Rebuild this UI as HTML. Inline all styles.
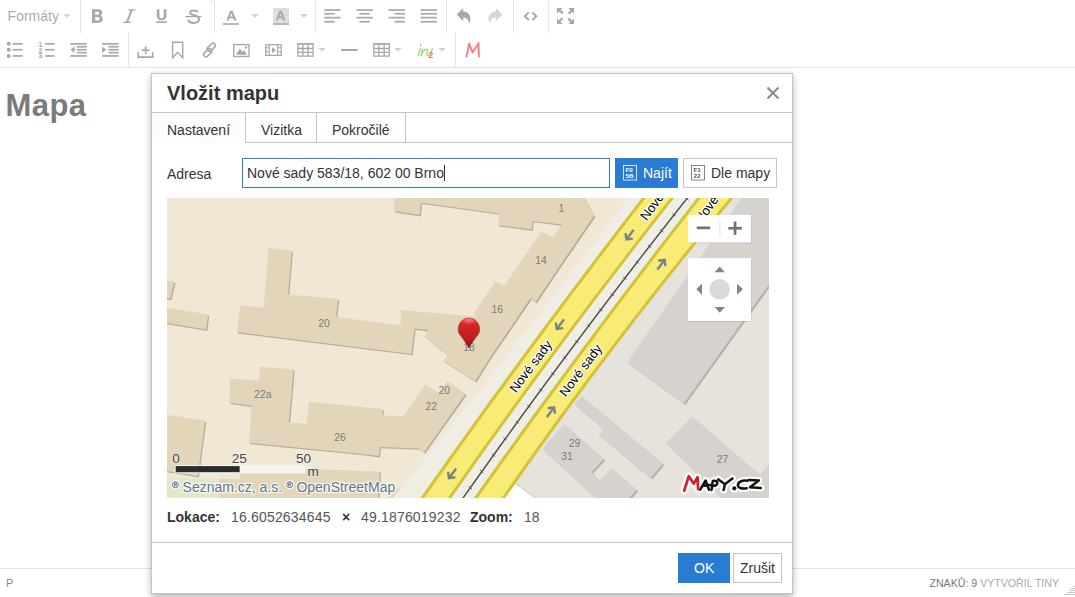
<!DOCTYPE html>
<html><head><meta charset="utf-8">
<style>
*{box-sizing:border-box}
html,body{margin:0;padding:0}
body{width:1075px;height:597px;overflow:hidden;background:#fff;position:relative;font-family:"Liberation Sans",sans-serif}
.a{position:absolute}
svg{display:block}
.ic{position:absolute;fill:#a6a6a6}
.sep{position:absolute;width:1px;background:#e6e6e6}
.t{position:absolute;white-space:nowrap;line-height:1}
</style></head><body>
<!-- toolbar -->
<div class="a" style="left:0;top:67px;width:1075px;height:1px;background:#e0e0e0"></div>
<div class="sep" style="left:80px;top:0;height:33px"></div>
<div class="sep" style="left:214px;top:0;height:33px"></div>
<div class="sep" style="left:211px;top:0;height:3px;background:#e3e3e3"></div>
<div class="sep" style="left:315px;top:0;height:33px"></div>
<div class="sep" style="left:446px;top:0;height:33px"></div>
<div class="sep" style="left:513px;top:0;height:33px"></div>
<div class="sep" style="left:548px;top:0;height:33px"></div>
<div class="sep" style="left:128px;top:33px;height:34px"></div>
<div class="sep" style="left:455px;top:33px;height:34px"></div>
<div id="toolbar"><svg class="a" style="left:0;top:0" width="600" height="67" viewBox="0 0 600 67">
<text x="7.6" y="21" font-family="Liberation Sans" font-size="14" fill="#acacac">Formáty</text>
<path d="M63.5 14.2H70.5L67 18Z" fill="#cfd3d6"/>
<g fill="#a8a8a8">
<path fill-rule="evenodd" d="M92 9.2H98C101 9.2 102.2 11 102.2 12.7C102.2 14.2 101.3 15.3 100.3 15.7C101.8 16.1 102.8 17.4 102.8 19.1C102.8 21.6 100.9 22.9 98 22.9H92ZM95.2 11.7V14.8H97.6C98.7 14.8 99.2 14.2 99.2 13.25C99.2 12.3 98.7 11.7 97.6 11.7ZM95.2 17.1V20.4H97.8C99 20.4 99.6 19.8 99.6 18.75C99.6 17.7 99 17.1 97.8 17.1Z"/>
<path d="M128.6 9.2H135.6L135.3 10.6H132.6L128.3 21.5H130.7L130.4 22.9H123.4L123.7 21.5H126.2L130.5 10.6H128.3Z"/>
<path d="M156.8 9.2H159.4V15.8C159.4 17.6 160.3 18.4 161.6 18.4C162.9 18.4 163.8 17.6 163.8 15.8V9.2H166.4V15.8C166.4 18.9 164.5 20.3 161.6 20.3C158.7 20.3 156.8 18.9 156.8 15.8Z"/>
<rect x="156.2" y="21.2" width="10.8" height="1.7"/>
<path d="M197.6 12.3C197.2 11 196 10.6 193.5 10.6C191 10.6 190.2 11.6 190.2 12.7C190.2 14.3 192.3 14.8 194.2 15.3C196.9 16 199 16.9 199 19.3C199 21.6 197.2 22.9 193.6 22.9C190.5 22.9 188.7 21.8 188.3 19.7" fill="none" stroke="#a8a8a8" stroke-width="2"/>
<rect x="185.2" y="15.9" width="16.4" height="1.3"/>
<path d="M230.2 10.8H232.6L236.4 20.6H234.1L233.2 18.2H229.5L228.6 20.6H226.4ZM230.1 16.4H232.6L231.4 12.9Z"/>
<rect x="222.9" y="23.2" width="16.1" height="1.6"/>
<path d="M251.1 13.9H258.9L255 18Z" fill="#cfd3d6"/>
<rect x="273.1" y="8" width="15.9" height="15.4" fill="#dedede"/>
<path d="M279.4 10.8H281.8L285.4 20.6H283.2L282.3 18.2H278.8L277.9 20.6H275.8ZM279.3 16.4H281.8L280.6 12.9Z"/>
<rect x="273.1" y="23.2" width="15.9" height="1.6"/>
<path d="M300 13.9H307.8L303.9 18Z" fill="#cfd3d6"/>
<rect x="324.2" y="9.2" width="16.4" height="1.7"/><rect x="324.2" y="12.9" width="10.4" height="1.7"/><rect x="324.2" y="16.8" width="16.4" height="1.7"/><rect x="324.2" y="20.9" width="10.4" height="1.7"/>
<rect x="356.4" y="9.2" width="16.4" height="1.7"/><rect x="359.4" y="12.9" width="10.4" height="1.7"/><rect x="356.4" y="16.8" width="16.4" height="1.7"/><rect x="359.4" y="20.9" width="10.4" height="1.7"/>
<rect x="388.6" y="9.2" width="16.4" height="1.7"/><rect x="394.6" y="12.9" width="10.4" height="1.7"/><rect x="388.6" y="16.8" width="16.4" height="1.7"/><rect x="394.6" y="20.9" width="10.4" height="1.7"/>
<rect x="420.6" y="9.2" width="16.4" height="1.7"/><rect x="420.6" y="12.9" width="16.4" height="1.7"/><rect x="420.6" y="16.8" width="16.4" height="1.7"/><rect x="420.6" y="20.9" width="16.4" height="1.7"/>
<path d="M456.7 14.6L463.2 8V11.6C467.6 11.8 470.4 14.5 470.4 18.6C470.4 20.5 469.8 22.2 468.8 23.8C469.1 20.6 467.2 17.7 463.2 17.6V21.2Z"/>
<path d="M502.3 14.6L495.8 8V11.6C491.4 11.8 488.6 14.5 488.6 18.6C488.6 20.5 489.2 22.2 490.2 23.8C489.9 20.6 491.8 17.7 495.8 17.6V21.2Z" fill="#d6d6d6"/>
<path d="M528.8 12.4L524.8 16.2L528.8 20M532.4 12.4L536.4 16.2L532.4 20" fill="none" stroke="#a8a8a8" stroke-width="1.9"/>
<path d="M557 8H562.6L560.8 9.8L563.6 12.6L562 14.2L559.2 11.4L557 13.6ZM574 8V13.6L572.2 11.8L569.4 14.6L567.8 13L570.6 10.2L568.4 8ZM557 24V18.4L558.8 20.2L561.6 17.4L563.2 19L560.4 21.8L562.6 24ZM574 24H568.4L570.2 22.2L567.4 19.4L569 17.8L571.8 20.6L574 18.4Z"/>
<circle cx="8.7" cy="43.8" r="2"/><circle cx="8.7" cy="49.7" r="2"/><circle cx="8.7" cy="55.9" r="2"/>
<rect x="12.6" y="43" width="10" height="1.7"/><rect x="12.6" y="48.9" width="10" height="1.7"/><rect x="12.6" y="55.1" width="10" height="1.7"/>
<text x="38.4" y="46.9" font-family="Liberation Sans" font-size="7" font-weight="bold" fill="#a8a8a8">1</text><text x="38.4" y="52.5" font-family="Liberation Sans" font-size="7" font-weight="bold" fill="#a8a8a8">2</text><text x="38.4" y="58.1" font-family="Liberation Sans" font-size="7" font-weight="bold" fill="#a8a8a8">3</text>
<rect x="45" y="43" width="9.5" height="1.7"/><rect x="45" y="48.9" width="9.5" height="1.7"/><rect x="45" y="55.1" width="9.5" height="1.7"/>
<rect x="70.3" y="43" width="16.5" height="1.7"/><rect x="76.8" y="45.9" width="10" height="1.7"/><rect x="76.8" y="48.9" width="10" height="1.7"/><rect x="76.8" y="51.8" width="10" height="1.7"/><rect x="70.3" y="55.1" width="16.5" height="1.7"/>
<path d="M70.4 49.7L74.6 46.6V52.8Z"/>
<rect x="102.1" y="43" width="16.5" height="1.7"/><rect x="108.6" y="45.9" width="10" height="1.7"/><rect x="108.6" y="48.9" width="10" height="1.7"/><rect x="108.6" y="51.8" width="10" height="1.7"/><rect x="102.1" y="55.1" width="16.5" height="1.7"/>
<path d="M106.3 49.7L102.1 46.6V52.8Z"/>
<rect x="144.8" y="46.3" width="1.7" height="7.8"/><rect x="141.7" y="49.3" width="7.8" height="1.7"/>
<path d="M137.3 52.3H139V56.3H151.9V52.3H153.6V58H137.3Z"/>
<path d="M172.6 42.3H182.7V57.8L177.65 52.2L172.6 57.8Z" fill="none" stroke="#a8a8a8" stroke-width="1.4"/>
<g fill="none" stroke="#a8a8a8" stroke-width="1.6"><rect x="203" y="50.5" width="9.5" height="4.6" rx="2.3" transform="rotate(-45 207.75 52.8)"/><rect x="206.5" y="45" width="9.5" height="4.6" rx="2.3" transform="rotate(-45 211.25 47.3)"/></g>
<rect x="233.7" y="44.6" width="15.3" height="11.9" fill="none" stroke="#a8a8a8" stroke-width="1.4"/>
<path d="M236 54.8L239.8 48.5L242.5 52L244.2 50.3L247 54.8Z"/><circle cx="246" cy="47.5" r="1.2"/>
<rect x="265.7" y="44.8" width="15.5" height="10.6" fill="none" stroke="#a8a8a8" stroke-width="1.3"/>
<path d="M269.2 44.2V56M277.6 44.2V56M265 47.8H269.2M265 51.8H269.2M277.6 47.8H282M277.6 51.8H282" stroke="#a8a8a8" stroke-width="1.1"/>
<path d="M272 47.2L276 50.1L272 53Z"/>
<rect x="297.2" y="43" width="16.6" height="1.8"/>
<path d="M297.9 44.5V56.1H313.1V44.5M297.9 48.5H313.1M297.9 52.3H313.1M302.9 44.5V56.1M308.1 44.5V56.1" fill="none" stroke="#a8a8a8" stroke-width="1.3"/>
<path d="M318 48.1H325.9L322 51.8Z" fill="#cfd3d6"/>
<rect x="341" y="49" width="16.7" height="2"/>
<rect x="373.1" y="43" width="16.9" height="1.8"/>
<path d="M373.8 44.5V56.1H389.3V44.5M373.8 48.5H389.3M373.8 52.3H389.3M378.9 44.5V56.1M384.2 44.5V56.1" fill="none" stroke="#a8a8a8" stroke-width="1.3"/>
<path d="M394.2 47.9H401.9L398 51.8Z" fill="#cfd3d6"/>
<path d="M438.2 47.9H445.8L442 51.8Z" fill="#cfd3d6"/>
</g>
<path d="M420.6 44.5L420.8 45.8M420 48.5C419.5 51 418.8 53.5 418.2 55.8M422.5 49C422 51.5 421.4 53.8 421 56C422.5 52 424.5 49.5 426.5 49.3C428 49.2 427.6 51.5 427 53.5C426.6 55 426.8 56 428 55.8C430 55.4 431.5 52 432.2 48.8" fill="none" stroke="#a8d48a" stroke-width="1.4" stroke-linecap="round"/>
<text x="428.6" y="57.8" font-family="Liberation Sans" font-size="8.5" font-weight="bold" fill="#e07b7b">2</text>
<path d="M466.5 56.5C467.5 52 468.5 47.5 469.2 43.6C470.5 47 471.5 50 472.5 52.5C474.5 49.5 476.5 46.5 478.5 43.2C478.6 47.5 478.6 52 478.9 56.5" fill="none" stroke="#f08585" stroke-width="2" stroke-linecap="round" stroke-linejoin="round"/>
</svg></div>

<!-- content -->
<div class="t" style="left:5.6px;top:90.2px;font-size:31px;font-weight:bold;color:#7b7b7b;letter-spacing:0.4px">Mapa</div>

<!-- status -->
<div class="a" style="left:0;top:568px;width:1075px;height:1px;background:#e0e0e0"></div>
<div class="t" style="left:6px;top:578px;font-size:11px;color:#888">P</div>
<div class="t" style="left:929.5px;top:578px;font-size:10.6px;color:#777">ZNAKŮ: 9 <span style="color:#aaa">VYTVOŘIL TINY</span></div>

<svg class="a" style="left:1060px;top:584px" width="15" height="13" viewBox="1060 584 15 13"><g fill="#c4c4c4"><rect x="1073" y="585.8" width="2" height="1"/><rect x="1071" y="587.9" width="4" height="1"/><rect x="1069" y="589.9" width="6" height="1"/><rect x="1067" y="591.9" width="8" height="1"/><rect x="1065" y="594" width="10" height="1"/></g></svg>
<!-- modal -->
<div class="a" style="left:151px;top:73px;width:642px;height:521px;background:#fff;border:1px solid #c5c5c5;box-shadow:0 3px 7px rgba(0,0,0,.3)">
</div>
<div id="modal">
<div class="t" style="left:167px;top:83px;font-size:20px;font-weight:bold;color:#333">Vložit mapu</div>
<svg class="a" style="left:766px;top:86px" width="14" height="14" viewBox="0 0 14 14"><path d="M1.5 1.5L12.5 12.5M12.5 1.5L1.5 12.5" stroke="#8a8a8a" stroke-width="2"/></svg>
<div class="a" style="left:152px;top:113px;width:93px;height:29px;background:#fcfcfc"></div>
<div class="a" style="left:152px;top:112px;width:640px;height:1px;background:#c5c5c5"></div>
<div class="a" style="left:245px;top:142px;width:547px;height:1px;background:#c5c5c5"></div>
<div class="a" style="left:245px;top:113px;width:1px;height:30px;background:#c5c5c5"></div>
<div class="a" style="left:316px;top:113px;width:1px;height:30px;background:#c5c5c5"></div>
<div class="a" style="left:405px;top:113px;width:1px;height:30px;background:#c5c5c5"></div>
<div class="t" style="left:167px;top:123px;font-size:14px;color:#333">Nastavení</div>
<div class="t" style="left:261px;top:123px;font-size:14px;color:#333">Vizitka</div>
<div class="t" style="left:332px;top:123px;font-size:14px;color:#333">Pokročilé</div>
<div class="t" style="left:167px;top:167px;font-size:14px;color:#333">Adresa</div>
<div class="a" style="left:242px;top:158px;width:368px;height:30px;border:1px solid #2f7bd0"></div>
<div class="t" style="left:247px;top:165.3px;font-size:14px;color:#333">Nové sady 583/18, 602 00 Brno<span style="display:inline-block;width:1px;height:16px;background:#333;vertical-align:-3px"></span></div>
<div class="a" style="left:615px;top:158px;width:63px;height:30px;background:#2a7bd3"></div>
<svg class="a" style="left:622px;top:164px" width="16" height="17" viewBox="0 0 16 17"><rect x="1.5" y="1.5" width="13" height="14.5" fill="none" stroke="#e6effa" stroke-width="0.9"/><text x="3.5" y="8" font-size="6.2" fill="#fff" font-family="Liberation Sans" font-weight="bold">F0</text><text x="3.5" y="14.3" font-size="6.2" fill="#fff" font-family="Liberation Sans" font-weight="bold">5B</text></svg>
<div class="t" style="left:643px;top:166px;font-size:14px;color:#fff">Najít</div>
<div class="a" style="left:683px;top:158px;width:94px;height:30px;border:1px solid #c5c5c5;background:#fff"></div>
<svg class="a" style="left:690px;top:164px" width="16" height="17" viewBox="0 0 16 17"><rect x="1.5" y="1.5" width="13" height="14.5" fill="none" stroke="#777" stroke-width="0.9"/><text x="3.5" y="8" font-size="6.2" fill="#555" font-family="Liberation Sans" font-weight="bold">F1</text><text x="3.5" y="14.3" font-size="6.2" fill="#555" font-family="Liberation Sans" font-weight="bold">22</text></svg>
<div class="t" style="left:711px;top:166px;font-size:14px;color:#333">Dle mapy</div>
<div id="map"><svg class="a" style="left:167px;top:198px" width="602" height="300" viewBox="167 198 602 300">
<rect x="160" y="190" width="630" height="320" fill="#f0e7d5"/>
<polygon points="160.0,478.0 219.3,479.5 219.3,505.0 160.0,505.0" fill="#dfe9c8"/>
<polygon points="236.8,332.0 240.5,305.4 263.7,307.7 268.4,247.9 291.7,250.7 288.0,294.4 338.2,298.8 336.0,316.6 367.0,321.3 400.5,325.0 401.4,310.0 476.5,316.8 474.3,312.4 484.2,298.0 495.4,281.3 504.7,285.4 541.2,231.5 552.9,237.3 562.0,224.6 532.6,220.9 531.7,229.6 498.2,225.0 499.0,213.4 421.0,202.7 419.7,215.1 394.0,211.0 394.9,190.0 579.6,190.0 594.2,215.5 550.3,280.0 535.7,302.1 530.7,298.1 489.9,357.7 475.4,381.0 443.4,360.9 447.8,355.2 424.5,336.4 428.3,330.1 414.5,328.6 411.4,353.9" fill="#b6ad9e" transform="translate(1.2,1.4)"/><polygon points="236.8,332.0 240.5,305.4 263.7,307.7 268.4,247.9 291.7,250.7 288.0,294.4 338.2,298.8 336.0,316.6 367.0,321.3 400.5,325.0 401.4,310.0 476.5,316.8 474.3,312.4 484.2,298.0 495.4,281.3 504.7,285.4 541.2,231.5 552.9,237.3 562.0,224.6 532.6,220.9 531.7,229.6 498.2,225.0 499.0,213.4 421.0,202.7 419.7,215.1 394.0,211.0 394.9,190.0 579.6,190.0 594.2,215.5 550.3,280.0 535.7,302.1 530.7,298.1 489.9,357.7 475.4,381.0 443.4,360.9 447.8,355.2 424.5,336.4 428.3,330.1 414.5,328.6 411.4,353.9" fill="#e3d5ba"/>
<polygon points="160.0,280.3 174.4,281.5 170.2,298.8 160.0,297.8" fill="#b6ad9e" transform="translate(1.2,1.4)"/><polygon points="160.0,280.3 174.4,281.5 170.2,298.8 160.0,297.8" fill="#e3d5ba"/>
<polygon points="160.0,306.8 208.0,314.3 206.3,329.6 160.0,321.8" fill="#b6ad9e" transform="translate(1.2,1.4)"/><polygon points="160.0,306.8 208.0,314.3 206.3,329.6 160.0,321.8" fill="#e3d5ba"/>
<polygon points="260.0,366.8 293.5,369.3 288.9,422.2 306.5,423.7 308.8,401.7 382.6,408.9 382.6,415.2 403.0,416.4 425.6,384.3 439.2,393.4 447.4,380.9 465.5,393.8 424.1,452.2 418.8,448.4 379.6,446.9 378.8,456.0 360.0,453.7 248.9,442.7 251.7,405.8 229.3,402.7 230.3,378.4 258.7,380.8" fill="#b6ad9e" transform="translate(1.2,1.4)"/><polygon points="260.0,366.8 293.5,369.3 288.9,422.2 306.5,423.7 308.8,401.7 382.6,408.9 382.6,415.2 403.0,416.4 425.6,384.3 439.2,393.4 447.4,380.9 465.5,393.8 424.1,452.2 418.8,448.4 379.6,446.9 378.8,456.0 360.0,453.7 248.9,442.7 251.7,405.8 229.3,402.7 230.3,378.4 258.7,380.8" fill="#e3d5ba"/>
<polygon points="160.0,413.6 205.1,420.7 197.7,476.0 160.0,470.0" fill="#b6ad9e" transform="translate(1.2,1.4)"/><polygon points="160.0,413.6 205.1,420.7 197.7,476.0 160.0,470.0" fill="#e3d5ba"/>
<polygon points="219.3,478.7 239.8,479.3 239.8,466.6 380.0,471.4 377.7,505.0 219.3,505.0" fill="#b6ad9e" transform="translate(1.2,1.4)"/><polygon points="219.3,478.7 239.8,479.3 239.8,466.6 380.0,471.4 377.7,505.0 219.3,505.0" fill="#e3d5ba"/>
<polygon points="379.0,505.0 401.0,487.0 416.0,505.0" fill="#b6ad9e" transform="translate(1.2,1.4)"/><polygon points="379.0,505.0 401.0,487.0 416.0,505.0" fill="#e3d5ba"/>
<polygon points="634.0,190.0 622.7,205.0 611.3,220.0 600.0,235.0 588.5,250.0 577.1,265.0 565.5,280.0 554.0,295.0 542.4,310.0 530.7,325.0 519.0,340.0 507.2,355.0 495.4,370.0 483.6,385.0 471.7,400.0 459.7,415.0 447.7,430.0 435.7,445.0 423.6,460.0 411.5,475.0 399.3,490.0 387.1,505.0 387.1,505.0 415.6,505.0 415.6,505.0 426.1,490.0 436.7,475.0 447.3,460.0 458.0,445.0 468.8,430.0 479.6,415.0 490.4,400.0 501.4,385.0 512.3,370.0 523.3,355.0 534.4,340.0 545.5,325.0 556.7,310.0 567.9,295.0 579.2,280.0 590.6,265.0 602.0,250.0 613.4,235.0 624.9,220.0 636.5,205.0 648.1,190.0" fill="#f0eee4"/>
<polygon points="740.1,190.0 727.7,205.0 715.3,220.0 703.1,235.0 691.0,250.0 679.0,265.0 667.0,280.0 655.2,295.0 643.5,310.0 631.9,325.0 620.4,340.0 609.0,355.0 597.7,370.0 586.5,385.0 575.4,400.0 564.4,415.0 553.5,430.0 542.7,445.0 532.0,460.0 521.4,475.0 510.9,490.0 500.5,505.0 500.5,505.0 790.0,505.0 790.0,190.0" fill="#e6e2dc"/>
<polygon points="627.2,362.3 747.0,190.0 790.0,190.0 790.0,255.2 683.8,403.6" fill="#b5b2ad" transform="translate(1.6,1.5)"/><polygon points="627.2,362.3 747.0,190.0 790.0,190.0 790.0,255.2 683.8,403.6" fill="#d6d3cf"/>
<polygon points="581.9,396.5 662.9,463.8 650.6,477.9 598.7,434.7 603.1,428.6 574.1,404.0" fill="#b5b2ad" transform="translate(1.6,1.5)"/><polygon points="581.9,396.5 662.9,463.8 650.6,477.9 598.7,434.7 603.1,428.6 574.1,404.0" fill="#d6d3cf"/>
<polygon points="564.0,424.1 603.7,459.1 591.4,472.2 599.9,480.7 612.1,468.5 636.5,490.1 623.0,505.0 603.0,505.0 542.5,448.9" fill="#b5b2ad" transform="translate(1.6,1.5)"/><polygon points="564.0,424.1 603.7,459.1 591.4,472.2 599.9,480.7 612.1,468.5 636.5,490.1 623.0,505.0 603.0,505.0 542.5,448.9" fill="#d6d3cf"/>
<polygon points="692.0,416.4 790.0,501.0 790.0,505.0 729.0,505.0 665.7,443.1" fill="#b5b2ad" transform="translate(1.6,1.5)"/><polygon points="692.0,416.4 790.0,501.0 790.0,505.0 729.0,505.0 665.7,443.1" fill="#d6d3cf"/>
<polygon points="772.0,460.0 756.0,479.5 772.0,505.0" fill="#b5b2ad" transform="translate(1.6,1.5)"/><polygon points="772.0,460.0 756.0,479.5 772.0,505.0" fill="#d6d3cf"/>
<polygon points="515.4,483.5 544.5,505.0 498.0,505.0" fill="#ffffff"/><line x1="515.4" y1="483.5" x2="544.5" y2="505" stroke="#c9bfa8" stroke-width="0.8"/>
<polygon points="648.1,190.0 636.5,205.0 624.9,220.0 613.4,235.0 602.0,250.0 590.6,265.0 579.2,280.0 567.9,295.0 556.7,310.0 545.5,325.0 534.4,340.0 523.3,355.0 512.3,370.0 501.4,385.0 490.4,400.0 479.6,415.0 468.8,430.0 458.0,445.0 447.3,460.0 436.7,475.0 426.1,490.0 415.6,505.0 415.6,505.0 446.7,505.0 446.7,505.0 457.2,490.0 467.7,475.0 478.3,460.0 488.9,445.0 499.7,430.0 510.5,415.0 521.3,400.0 532.3,385.0 543.3,370.0 554.3,355.0 565.5,340.0 576.7,325.0 587.9,310.0 599.3,295.0 610.7,280.0 622.2,265.0 633.7,250.0 645.3,235.0 657.0,220.0 668.7,205.0 680.6,190.0" fill="#d2c33a"/>
<polygon points="651.9,190.0 640.3,205.0 628.7,220.0 617.2,235.0 605.8,250.0 594.4,265.0 583.0,280.0 571.7,295.0 560.5,310.0 549.3,325.0 538.2,340.0 527.1,355.0 516.1,370.0 505.2,385.0 494.2,400.0 483.4,415.0 472.6,430.0 461.8,445.0 451.1,460.0 440.5,475.0 429.9,490.0 419.4,505.0 419.4,505.0 442.9,505.0 442.9,505.0 453.4,490.0 463.9,475.0 474.5,460.0 485.1,445.0 495.9,430.0 506.7,415.0 517.5,400.0 528.5,385.0 539.5,370.0 550.5,355.0 561.7,340.0 572.9,325.0 584.1,310.0 595.5,295.0 606.9,280.0 618.4,265.0 629.9,250.0 641.5,235.0 653.2,220.0 664.9,205.0 676.8,190.0" fill="#f8ec76"/>
<polygon points="680.6,190.0 668.7,205.0 657.0,220.0 645.3,235.0 633.7,250.0 622.2,265.0 610.7,280.0 599.3,295.0 587.9,310.0 576.7,325.0 565.5,340.0 554.3,355.0 543.3,370.0 532.3,385.0 521.3,400.0 510.5,415.0 499.7,430.0 488.9,445.0 478.3,460.0 467.7,475.0 457.2,490.0 446.7,505.0 446.7,505.0 468.9,505.0 468.9,505.0 479.5,490.0 490.2,475.0 500.9,460.0 511.7,445.0 522.5,430.0 533.4,415.0 544.3,400.0 555.3,385.0 566.4,370.0 577.5,355.0 588.7,340.0 599.9,325.0 611.1,310.0 622.5,295.0 633.8,280.0 645.3,265.0 656.7,250.0 668.3,235.0 679.9,220.0 691.5,205.0 703.2,190.0" fill="#efeee5"/>
<polygon points="703.2,190.0 691.5,205.0 679.9,220.0 668.3,235.0 656.7,250.0 645.3,265.0 633.8,280.0 622.5,295.0 611.1,310.0 599.9,325.0 588.7,340.0 577.5,355.0 566.4,370.0 555.3,385.0 544.3,400.0 533.4,415.0 522.5,430.0 511.7,445.0 500.9,460.0 490.2,475.0 479.5,490.0 468.9,505.0 468.9,505.0 500.5,505.0 500.5,505.0 510.9,490.0 521.4,475.0 532.0,460.0 542.7,445.0 553.5,430.0 564.4,415.0 575.4,400.0 586.5,385.0 597.7,370.0 609.0,355.0 620.4,340.0 631.9,325.0 643.5,310.0 655.2,295.0 667.0,280.0 679.0,265.0 691.0,250.0 703.1,235.0 715.3,220.0 727.7,205.0 740.1,190.0" fill="#d2c33a"/>
<polygon points="707.0,190.0 695.3,205.0 683.7,220.0 672.1,235.0 660.5,250.0 649.1,265.0 637.6,280.0 626.3,295.0 614.9,310.0 603.7,325.0 592.5,340.0 581.3,355.0 570.2,370.0 559.1,385.0 548.1,400.0 537.2,415.0 526.3,430.0 515.5,445.0 504.7,460.0 494.0,475.0 483.3,490.0 472.7,505.0 472.7,505.0 496.7,505.0 496.7,505.0 507.1,490.0 517.6,475.0 528.2,460.0 538.9,445.0 549.7,430.0 560.6,415.0 571.6,400.0 582.7,385.0 593.9,370.0 605.2,355.0 616.6,340.0 628.1,325.0 639.7,310.0 651.4,295.0 663.2,280.0 675.2,265.0 687.2,250.0 699.3,235.0 711.5,220.0 723.9,205.0 736.3,190.0" fill="#f8ec76"/>
<polyline points="693.7,190.0 681.8,205.0 670.0,220.0 658.3,235.0 646.6,250.0 635.0,265.0 623.5,280.0 612.0,295.0 600.6,310.0 589.3,325.0 578.0,340.0 566.8,355.0 555.6,370.0 544.5,385.0 533.5,400.0 522.5,415.0 511.7,430.0 500.8,445.0 490.1,460.0 479.4,475.0 468.7,490.0 458.1,505.0 458.1,505.0" fill="none" stroke="#4d4d4d" stroke-width="1.35"/>
<path d="M685.2 197.5L688.4 199.9M672.5 213.6L675.7 216.0M660.1 229.4L663.3 231.8M647.9 245.1L651.1 247.5M635.6 261.0L638.8 263.4M623.3 277.0L626.5 279.4M610.7 293.4L613.9 295.8M599.2 308.6L602.4 311.0M587.1 324.5L590.3 326.9M575.2 340.4L578.4 342.8M563.2 356.5L566.4 358.9M551.2 372.6L554.4 375.0M539.3 388.7L542.5 391.1M527.4 405.0L530.6 407.4M515.6 421.1L518.8 423.5M503.5 437.8L506.7 440.2M491.8 454.1L495.0 456.5M480.2 470.3L483.4 472.7M468.7 486.5L471.9 488.9" stroke="#5a5a5a" stroke-width="1"/>
<path d="M633.6 229.9L626.4 239.5M625.5 233.2L626.4 239.5L632.7 238.6" fill="none" stroke="#7b7f87" stroke-width="2.4"/>
<path d="M564.0 319.4L556.8 329.0M555.9 322.7L556.8 329.0L563.1 328.1" fill="none" stroke="#7b7f87" stroke-width="2.4"/>
<path d="M456.2 468.5L449.0 478.1M448.1 471.8L449.0 478.1L455.3 477.2" fill="none" stroke="#7b7f87" stroke-width="2.4"/>
<path d="M657.4 269.5L664.6 259.9M665.5 266.2L664.6 259.9L658.3 260.8" fill="none" stroke="#7b7f87" stroke-width="2.4"/>
<path d="M546.9 417.0L554.1 407.4M555.0 413.7L554.1 407.4L547.8 408.3" fill="none" stroke="#7b7f87" stroke-width="2.4"/>
<text x="0" y="0" text-anchor="middle" font-family="Liberation Sans" font-size="13" fill="#000" stroke="#fff" stroke-width="2.4" paint-order="stroke" stroke-linejoin="round" transform="translate(534.3,369) rotate(-53.13)">Nové sady</text>
<text x="0" y="0" text-anchor="middle" font-family="Liberation Sans" font-size="13" fill="#000" stroke="#fff" stroke-width="2.4" paint-order="stroke" stroke-linejoin="round" transform="translate(584.2,373) rotate(-53.13)">Nové sady</text>
<text x="0" y="0" font-family="Liberation Sans" font-size="13" fill="#000" stroke="#fff" stroke-width="2.4" paint-order="stroke" stroke-linejoin="round" transform="translate(646.5,221.2) rotate(-53.13)">Nové sady</text>
<text x="0" y="0" font-family="Liberation Sans" font-size="13" fill="#000" stroke="#fff" stroke-width="2.4" paint-order="stroke" stroke-linejoin="round" transform="translate(701,224) rotate(-53.13)">Nové sady</text>
<text x="561.4" y="212.0" font-family="Liberation Sans" font-size="10.3" fill="#7b7b7b" text-anchor="middle">1</text>
<text x="541.0" y="263.5" font-family="Liberation Sans" font-size="10.3" fill="#7b7b7b" text-anchor="middle">14</text>
<text x="497.2" y="313.2" font-family="Liberation Sans" font-size="10.3" fill="#7b7b7b" text-anchor="middle">16</text>
<text x="469.0" y="351.2" font-family="Liberation Sans" font-size="10.3" fill="#7b7b7b" text-anchor="middle">18</text>
<text x="324.0" y="327.0" font-family="Liberation Sans" font-size="10.3" fill="#7b7b7b" text-anchor="middle">20</text>
<text x="444.2" y="394.0" font-family="Liberation Sans" font-size="10.3" fill="#7b7b7b" text-anchor="middle">20</text>
<text x="431.2" y="410.4" font-family="Liberation Sans" font-size="10.3" fill="#7b7b7b" text-anchor="middle">22</text>
<text x="262.8" y="397.8" font-family="Liberation Sans" font-size="10.3" fill="#7b7b7b" text-anchor="middle">22a</text>
<text x="340.0" y="441.4" font-family="Liberation Sans" font-size="10.3" fill="#7b7b7b" text-anchor="middle">26</text>
<text x="574.5" y="447.0" font-family="Liberation Sans" font-size="10.3" fill="#7b7b7b" text-anchor="middle">29</text>
<text x="567.0" y="460.3" font-family="Liberation Sans" font-size="10.3" fill="#7b7b7b" text-anchor="middle">31</text>
<text x="722.6" y="463.0" font-family="Liberation Sans" font-size="10.3" fill="#7b7b7b" text-anchor="middle">27</text>
<defs><linearGradient id="pg" x1="0" y1="0" x2="0" y2="1"><stop offset="0" stop-color="#e84a4a"/><stop offset="0.25" stop-color="#d42424"/><stop offset="0.7" stop-color="#bb1d1d"/><stop offset="1" stop-color="#8e1010"/></linearGradient>
<radialGradient id="ph" cx="0.5" cy="0.2" r="0.5"><stop offset="0" stop-color="#ff9a9a" stop-opacity=".7"/><stop offset="1" stop-color="#ff9a9a" stop-opacity="0"/></radialGradient></defs>
<path d="M468.9 348.2C466.5 343 462.5 338.5 459.6 334.5C458.6 333 458.2 331.2 458.2 329.2C458.2 322.8 463 318 468.9 318C474.8 318 479.7 322.8 479.7 329.2C479.7 331.2 479.2 333 478.2 334.5C475.3 338.5 471.3 343 468.9 348.2Z" fill="url(#pg)" stroke="#8f1212" stroke-width="0.5" stroke-opacity=".7"/>
<ellipse cx="468.9" cy="322.5" rx="7" ry="3.8" fill="url(#ph)"/>
<rect x="688.5" y="215.8" width="63" height="27.5" fill="#000" fill-opacity=".12"/><rect x="688" y="215" width="63" height="27.5" fill="#fff"/>
<rect x="719.4" y="219.6" width="1" height="18" fill="#e3e3e3"/>
<rect x="696.7" y="226.5" width="13.5" height="2.7" fill="#6c7480"/>
<rect x="728.3" y="226.9" width="13.5" height="2.7" fill="#6c7480"/><rect x="733.7" y="221.5" width="2.7" height="13.3" fill="#6c7480"/>
<rect x="688.5" y="259" width="63" height="62.7" fill="#000" fill-opacity=".12"/><rect x="688" y="258.2" width="63" height="62.7" fill="#fff"/>
<path d="M714.6 272.2L719.75 266.6L724.9 272.2Z M714.6 307L719.75 312.7L724.9 307Z M702 283.6L696.3 289.2L702 294.8Z M737 283.6L742.8 289.2L737 294.8Z" fill="#7d8591"/>
<circle cx="719.6" cy="289.2" r="10.3" fill="#dadada"/>
<rect x="174.5" y="465" width="131" height="8.4" fill="#fff" fill-opacity=".6"/>
<rect x="175.7" y="466.1" width="64.1" height="6.1" fill="#2b2b2b"/><rect x="239.8" y="466.1" width="64.8" height="6.1" fill="#f7f4ee"/>
<text x="172.2" y="463" font-family="Liberation Sans" font-size="13.6" fill="#444" stroke="#fff" stroke-width="1.5" stroke-opacity=".5" paint-order="stroke">0</text><text x="231.8" y="463" font-family="Liberation Sans" font-size="13.6" fill="#444" stroke="#fff" stroke-width="1.5" stroke-opacity=".5" paint-order="stroke">25</text><text x="296" y="463" font-family="Liberation Sans" font-size="13.6" fill="#444" stroke="#fff" stroke-width="1.5" stroke-opacity=".5" paint-order="stroke">50</text><text x="307.6" y="475.8" font-family="Liberation Sans" font-size="13.6" fill="#444" stroke="#fff" stroke-width="1.5" stroke-opacity=".5" paint-order="stroke">m</text>
<circle cx="175.4" cy="484.7" r="4.6" fill="#fff"/><circle cx="175.4" cy="484.7" r="3" fill="none" stroke="#556" stroke-width="0.9"/><path d="M174.4 486.3V483.2H175.9C177 483.2 177 484.8 175.9 484.8H174.4M175.7 484.8L176.6 486.3" fill="none" stroke="#556" stroke-width="0.8"/>
<text x="182.6" y="492" font-family="Liberation Sans" font-size="14" fill="#64768a" stroke="#fff" stroke-width="2.5" stroke-opacity=".8" paint-order="stroke" stroke-linejoin="round">Seznam.cz, a.s.</text>
<circle cx="281.3" cy="490" r="1" fill="#fff"/><circle cx="281.3" cy="490" r=".5" fill="#555"/>
<circle cx="289.6" cy="484.7" r="4.6" fill="#fff"/><circle cx="289.6" cy="484.7" r="3" fill="none" stroke="#556" stroke-width="0.9"/><path d="M288.6 486.3V483.2H290.1C291.2 483.2 291.2 484.8 290.1 484.8H288.6M289.9 484.8L290.8 486.3" fill="none" stroke="#556" stroke-width="0.8"/>
<text x="296.4" y="492" font-family="Liberation Sans" font-size="14" fill="#64768a" stroke="#fff" stroke-width="2.5" stroke-opacity=".8" paint-order="stroke" stroke-linejoin="round">OpenStreetMap</text>
<g fill="none" stroke-linecap="round" stroke-linejoin="round">
<path d="M684.2 490.7L688.8 476.2L693.8 483.6L697.6 477.3L698.1 489.2" stroke="#fff" stroke-width="7.5"/><path d="M700.2 489.7L705.6 480.5L709 489.7M702.3 485.9L711.9 484.7M711.5 490.1L712.8 480.9C716.5 480.6 718 481.5 717.3 483.6C716.8 485.3 714.8 485.8 713.2 485.9M718.2 479.2L724.9 484.2L732.4 478.4M724.9 484.2L723.6 490.1M747.5 480.8C743 479.8 738 481.5 737.9 485.1C737.8 488 742 489 746.7 488.2M748.8 480L758.8 480.5L750 487.2L760.9 488" stroke="#fff" stroke-width="7"/><circle cx="734.3" cy="488.3" r="4.4" fill="#fff" stroke="none"/>
<path d="M684.2 490.7L688.8 476.2L693.8 483.6L697.6 477.3L698.1 489.2" stroke="#d51f2b" stroke-width="2.8"/><path d="M700.2 489.7L705.6 480.5L709 489.7M702.3 485.9L711.9 484.7M711.5 490.1L712.8 480.9C716.5 480.6 718 481.5 717.3 483.6C716.8 485.3 714.8 485.8 713.2 485.9M718.2 479.2L724.9 484.2L732.4 478.4M724.9 484.2L723.6 490.1M747.5 480.8C743 479.8 738 481.5 737.9 485.1C737.8 488 742 489 746.7 488.2M748.8 480L758.8 480.5L750 487.2L760.9 488" stroke="#111" stroke-width="2.5"/><circle cx="734.3" cy="488.3" r="2.1" fill="#111" stroke="none"/>
</g>
</svg></div><!--endmap-->
<div class="t" style="left:167px;top:510px;font-size:14px;color:#333"><b>Lokace:</b></div>
<div class="t" style="left:231px;top:510px;font-size:14px;color:#555;letter-spacing:0.18px">16.6052634645</div>
<div class="t" style="left:342px;top:510px;font-size:14px;color:#333;font-weight:bold">×</div>
<div class="t" style="left:361px;top:510px;font-size:14px;color:#555;letter-spacing:0.18px">49.1876019232</div>
<div class="t" style="left:470px;top:510px;font-size:14px;color:#333"><b>Zoom:</b></div>
<div class="t" style="left:524px;top:510px;font-size:14px;color:#555">18</div>
<div class="a" style="left:152px;top:542px;width:640px;height:1px;background:#c5c5c5"></div>
<div class="a" style="left:678px;top:553px;width:52px;height:30px;background:#2a7bd3"></div>
<div class="t" style="left:694px;top:561px;font-size:14px;color:#fff">OK</div>
<div class="a" style="left:733px;top:553px;width:49px;height:30px;border:1px solid #c5c5c5;background:#fff"></div>
<div class="t" style="left:740px;top:561px;font-size:14px;color:#333">Zrušit</div>
</div>
</body></html>
